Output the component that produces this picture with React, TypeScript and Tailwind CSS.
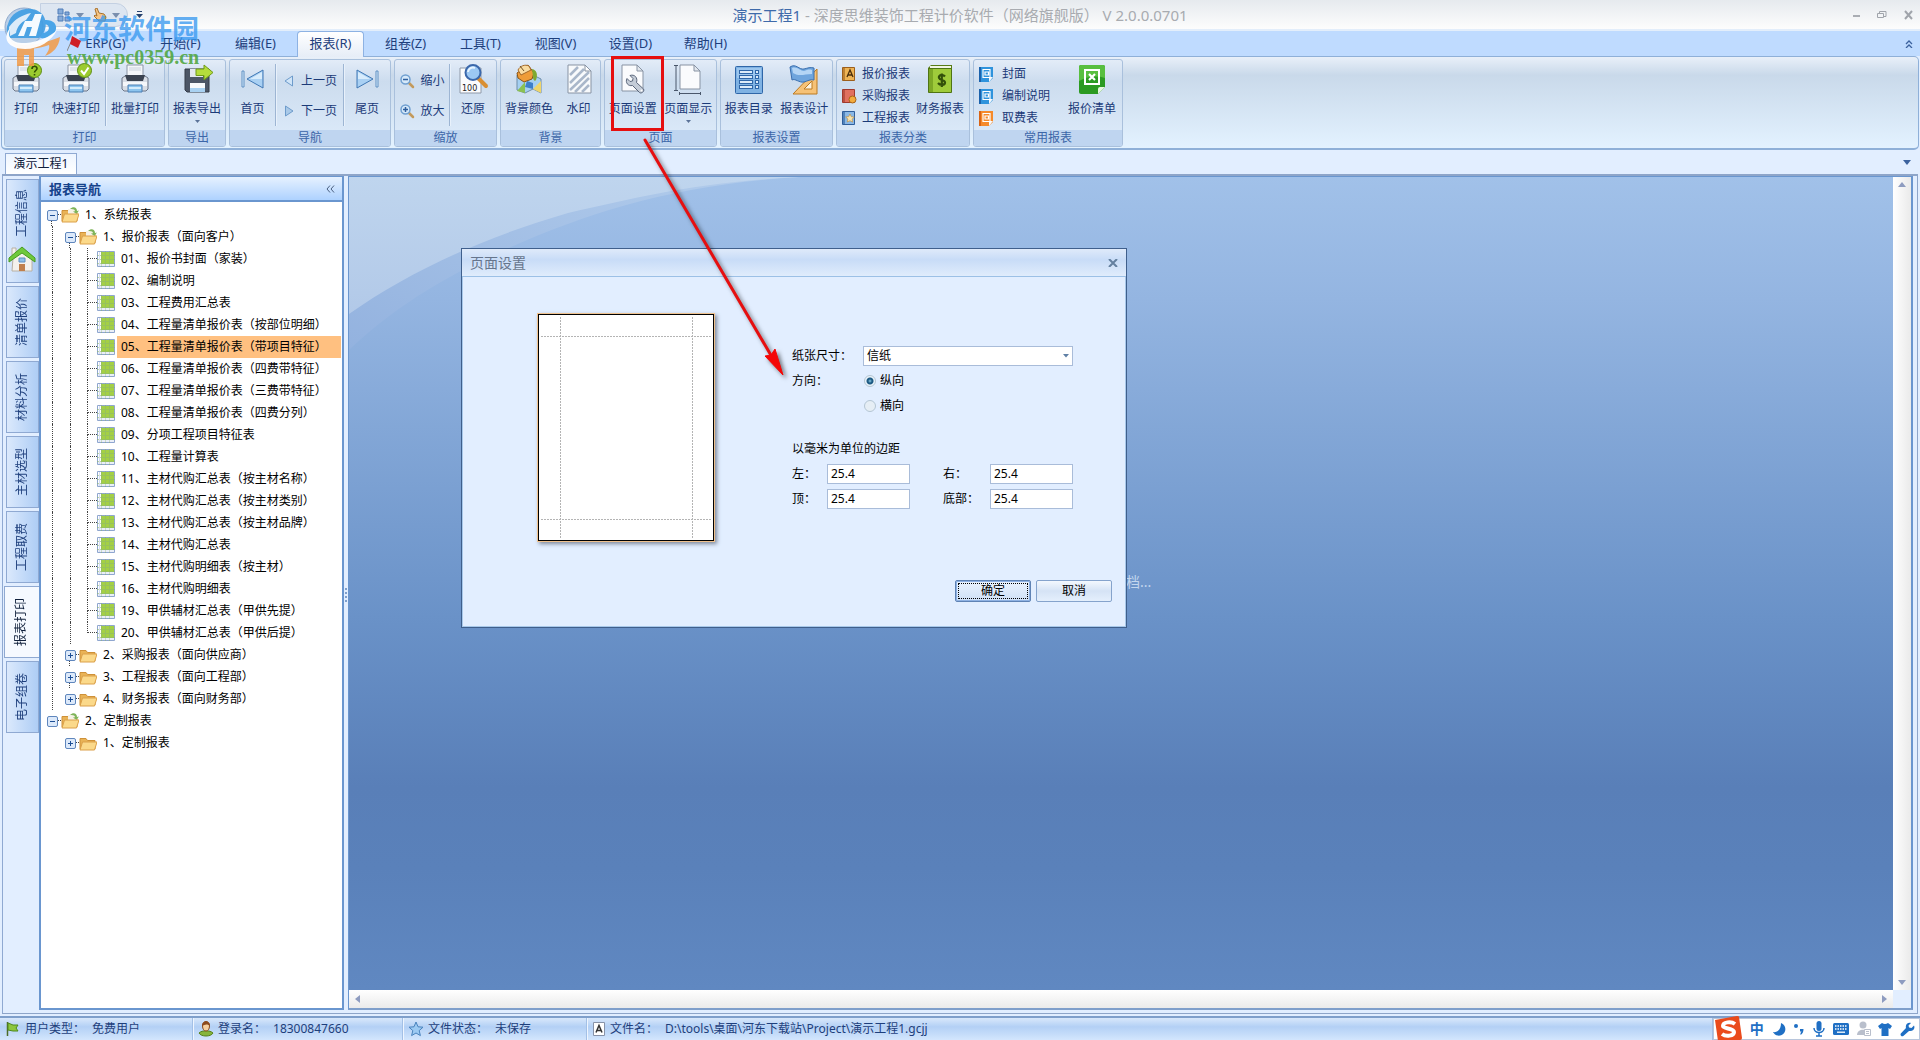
import type { ReactNode } from "react";

const FONT =
  "font-['Noto_Sans','Noto_Sans_CJK_SC',sans-serif] text-[12px] leading-[16px]";

/* ---------- ribbon icons ---------- */

function PrinterIcon({ badge }: { badge?: "question" | "check" }) {
  return (
    <svg width="32" height="32" viewBox="0 0 32 32">
      <path d="M8 2h16v12H8z" fill="#f4f6f9" stroke="#8b95a5" />
      <path d="M10 4h12v4H10z" fill="#dfe4eb" />
      <path d="M3 15l3-2h20l3 2v11l-2 2H5l-2-2z" fill="#d8dde5" stroke="#6c7789" />
      <path d="M6 12h20l-2 6H8z" fill="#3a4250" />
      <path d="M4 19h24v4H4z" fill="#f5f7fa" />
      <path d="M9 22h14v7H9z" fill="#8cc4ee" stroke="#4a7fb4" />
      <path d="M10 25h12" stroke="#d4ebfb" strokeWidth="2" />
      {badge && (
        <circle cx="24.500" cy="7.500" r="7" fill="#9ccb2f" stroke="#5d8d12" />
      )}
      {badge === "question" && (
        <path
          d="M22 6c0-3.500 5-3.500 5-.5 0 2-2.500 2-2.500 4M24.500 11v1.500"
          fill="none"
          stroke="#304d05"
          strokeWidth="1.600"
        />
      )}
      {badge === "check" && (
        <path d="M21 7.500l3 3.500 4.500-6.500" fill="none" stroke="#fff" strokeWidth="2" />
      )}
    </svg>
  );
}

function ExportIcon() {
  return (
    <svg width="32" height="32" viewBox="0 0 32 32">
      <path d="M4 6h24v23H6l-2-2z" fill="#4c5666" stroke="#343c49" />
      <path d="M9 6h13v8H9z" fill="#e3e8ee" />
      <path d="M9 20h15v9H9z" fill="#f7f9fb" />
      <path d="M9 25h15v4H9z" fill="#a9d1f1" />
      <path d="M15 6h8V2l9 7.500-9 7.500v-4.500h-8z" fill="#b5dc3c" stroke="#6f9a18" />
    </svg>
  );
}

function SkipIcon({ last }: { last?: boolean }) {
  return (
    <svg width="32" height="32" viewBox="0 0 32 32" className={last ? "-scale-x-100" : ""}>
      <path d="M5 8v16h2V8z" fill="#d8ecfc" stroke="#5e8fc2" />
      <path d="M26 7v18L10 16z" fill="#a9d0f3" stroke="#3f77b4" />
      <path d="M25 9v7H13z" fill="#d8ecfc" />
    </svg>
  );
}

function StepIcon({ next }: { next?: boolean }) {
  return (
    <svg width="14" height="14" viewBox="0 0 14 14" className={next ? "-scale-x-100" : ""}>
      <path d="M10.500 2v10L3 7z" fill={next ? "#a9c9e8" : "#cfe4f8"} stroke="#6d9bcb" />
    </svg>
  );
}

function ZoomIcon({ plus }: { plus?: boolean }) {
  return (
    <svg width="16" height="16" viewBox="0 0 16 16">
      <path d="M10 10l4 4" stroke="#c39a5c" strokeWidth="2.500" strokeLinecap="round" />
      <circle cx="6.500" cy="6.500" r="4.500" fill="#d6e9fa" stroke="#6f9fd0" strokeWidth="1.500" />
      <path d={plus ? "M4 6.500h5M6.500 4v5" : "M4 6.500h5"} stroke="#2f5f9e" strokeWidth="1.500" />
    </svg>
  );
}

function RestoreIcon() {
  return (
    <svg width="32" height="32" viewBox="0 0 32 32">
      <path d="M3 5h21v25H3z" fill="#fbfcfd" stroke="#8e99a8" />
      <path d="M21 15l8 8" stroke="#d98f33" strokeWidth="4" strokeLinecap="round" />
      <circle cx="16" cy="9.500" r="7.500" fill="#9cc8f3" stroke="#3b68ab" strokeWidth="2" />
      <path d="M11 9a5 5 0 0 1 7-4" fill="none" stroke="#e7f4ff" strokeWidth="2" />
      <text x="5" y="28" fontSize="8" fill="#222" fontFamily="DejaVu Sans">
        100
      </text>
    </svg>
  );
}

function BackColorIcon() {
  return (
    <svg width="32" height="32" viewBox="0 0 32 32">
      <path d="M4 12l8 4 8-4 8 4v14l-8-4-8 4-8-3z" fill="#a5d0f2" stroke="#6f8ca8" />
      <path d="M4 28l8-9v11z" fill="#8cc152" />
      <path d="M12 24l8 2v-6l-6-2z" fill="#3e7fc9" />
      <path d="M20 26l8-8v12z" fill="#efd56a" />
      <path d="M4 10l11-8 6 8-2 6-8 3-6-4z" fill="#ef9c38" stroke="#8a5415" />
      <path d="M5 7c2-4 7-6 11-4l2 4-10 5z" fill="#f9dba0" stroke="#a2682a" />
      <path d="M7 3l4 5" stroke="#6f5124" />
      <path d="M19 6c5 1 6 6 4 11-1 2-3 0-3-3z" fill="#7fa92f" />
    </svg>
  );
}

function WatermarkIcon() {
  return (
    <svg width="32" height="32" viewBox="0 0 32 32">
      <path d="M5 2h17l6 6v22H5z" fill="#f8fafc" stroke="#8893a3" />
      <path
        d="M7 12l8-8M7 20L21 6M7 27L26 9M12 29l14-14M19 29l7-7"
        stroke="#a9b7ca"
        strokeWidth="2.500"
      />
      <path d="M22 2l6 6h-6z" fill="#fff" stroke="#8893a3" />
    </svg>
  );
}

function PageSetupIcon() {
  return (
    <svg width="32" height="32" viewBox="0 0 32 32">
      <path d="M5 2h15l6 6v20H5z" fill="#fafbfd" stroke="#8893a3" />
      <path d="M20 2v6h6z" fill="#e2e7ee" stroke="#8893a3" />
      <path
        d="M13 12.500l3 3-.5 2.500-2.500.5-3-3c-2 4 1 8 5.500 7l7 7c1.500 1.500 5.500-1 4-3.500l-7-6.500c1.500-5-2-8.500-6.500-7z"
        fill="#c4ccd7"
        stroke="#59657a"
      />
      <circle cx="24.500" cy="27.500" r="1" fill="#fff" />
    </svg>
  );
}

function PageViewIcon() {
  return (
    <svg width="32" height="32" viewBox="0 0 32 32">
      <path d="M8 2h14l6 6v18H8z" fill="#fafbfd" stroke="#8893a3" />
      <path d="M22 2v6h6z" fill="#e2e7ee" stroke="#8893a3" />
      <path d="M2 2.500h4M4 2v26M2 27.500h4M7 30.500h21M7.500 29v3M28.500 29v3" stroke="#4a576b" fill="none" />
    </svg>
  );
}

function CatalogIcon() {
  return (
    <svg width="32" height="32" viewBox="0 0 32 32">
      <rect x="2.500" y="3.500" width="27" height="27" rx="1" fill="#7fb2e3" stroke="#2f66a8" />
      <rect x="4" y="5" width="24" height="10" fill="#9cc6ee" />
      {[7, 12, 17, 22].map((y) => (
        <g key={y} fill="#dcebf9" stroke="#2f66a8">
          <rect x="6.500" y={y + 0.5} width="13" height="3" />
          <rect x="22.500" y={y + 0.5} width="3" height="3" />
        </g>
      ))}
    </svg>
  );
}

function DesignIcon() {
  return (
    <svg width="32" height="32" viewBox="0 0 32 32">
      <path d="M29 6v25H5z" fill="#f6c277" stroke="#bb7a22" />
      <path d="M24 18v8h-8z" fill="#fdf3df" stroke="#bb7a22" />
      <path d="M2 4c6-4 9 3 14 2 4-1 6-2 10-1v12c-4-1-6 1-10 2-5 1-9-4-12-2z" fill="#6fa5dd" stroke="#3a6eae" />
      <path d="M4 5c5-2 8 3 12 3 3-1 5-2 8-1v4c-8 0-12 3-19-1z" fill="#b4d5f5" />
    </svg>
  );
}

function LedgerIcon() {
  return (
    <svg width="32" height="32" viewBox="0 0 32 32">
      <path d="M4 5l3-3h21v25l-2 2H4z" fill="#587c16" />
      <path d="M6 3h21v3H6z" fill="#f2f6e2" />
      <path d="M4.500 5.500h23v24h-23z" fill="#9fcb3b" stroke="#4f7413" />
      <path d="M5 6h4v23H5z" fill="#7da826" />
      <path
        d="M21 13.500c-2-2.500-7-1.500-6 1.500s6 1.500 6 4.500-5 3-7 .5M17.800 10.500v13.500"
        fill="none"
        stroke="#33500a"
        strokeWidth="2.200"
      />
    </svg>
  );
}

function ExcelIcon() {
  return (
    <svg width="32" height="32" viewBox="0 0 32 32">
      <path d="M3 4q0-2 2-2h22q2 0 2 2v20l-7 7H5q-2 0-2-2z" fill="#2b9a22" />
      <path d="M3 4q0-2 2-2h22q2 0 2 2v11q-13-4-26 3z" fill="#58bf3f" />
      <path d="M9 7h14v14H9z" fill="none" stroke="#fff" strokeWidth="2" />
      <path d="M13 11l6 6M19 11l-6 6" stroke="#fff" strokeWidth="2.200" />
      <path d="M29 24l-7 7v-5q0-2 2-2z" fill="#e6f6df" />
    </svg>
  );
}

function BookIcon({ fill, edge, kind }: { fill: string; edge: string; kind: "letter" | "coin" | "star" }) {
  return (
    <svg width="16" height="16" viewBox="0 0 16 16">
      <path d="M1.500 1.500h12v13h-12z" fill={fill} stroke={edge} />
      <path d="M2 2h2v12H2z" fill={edge} opacity=".6" />
      {kind === "letter" && <path d="M6 11l3-7 3 7M7 9h4" fill="none" stroke="#4b2f0c" strokeWidth="1.300" />}
      {kind === "coin" && <circle cx="11.500" cy="11.500" r="3.500" fill="#f2ac3e" stroke="#a8641a" />}
      {kind === "star" && (
        <path d="M9 4l1.300 2.700 3 .4-2.200 2 .6 3L9 10.700 6.300 12l.6-3-2.200-2 3-.4z" fill="#f6e3b0" stroke="#c18a33" strokeWidth=".6" />
      )}
    </svg>
  );
}

function SheetIcon({ fill, dark }: { fill: string; dark: string }) {
  return (
    <svg width="16" height="16" viewBox="0 0 16 16">
      <path d="M1 1h14v11l-4 4H1z" fill={fill} />
      <path d="M1 1h2v15H1z" fill={dark} />
      <path d="M15 11l-4 5v-4q0-1 1-1z" fill="#f4f8fc" />
      <path d="M5 3.500h7v8H5zM7 6h3.500v3H7z" fill="none" stroke="#fff" strokeWidth="1.200" />
    </svg>
  );
}

/* ---------- small shared pieces ---------- */

function Triangle({ dir, color = "#5a7298" }: { dir: "up" | "down" | "left" | "right"; color?: string }) {
  const shapes = {
    up: "M0 6h8L4 1z",
    down: "M0 2h8L4 7z",
    left: "M6 0v8L1 4z",
    right: "M2 0v8l5-4z",
  };
  return (
    <svg width="8" height="8" viewBox="0 0 8 8" className="shrink-0">
      <path d={shapes[dir]} fill={color} />
    </svg>
  );
}

function Separator() {
  return <div className="my-1 w-px bg-[#9db5d3] shadow-[1px_0_0_#e8f1fb]" />;
}

function RibbonGroup({ title, width, children }: { title: string; width: string; children: ReactNode }) {
  return (
    <section
      className={`flex flex-col overflow-hidden rounded-[3px] border border-[#a9c0dc] bg-linear-to-b from-[#e3ecf8] via-[#ccdcee] via-25% to-[#deecfb] ${width}`}
    >
      <div className="flex flex-1">{children}</div>
      <h2 className="h-4 bg-[#bfd5f0] text-center leading-[16px] text-[#3c66a8]">{title}</h2>
    </section>
  );
}

function BigButton({ icon, label, width = "flex-1", menu }: { icon: ReactNode; label: string; width?: string; menu?: boolean }) {
  return (
    <button type="button" className={`flex flex-col items-center pt-[3px] whitespace-nowrap ${width}`}>
      {icon}
      <span className="mt-[6px]">{label}</span>
      {menu && (
        <svg width="5" height="3" viewBox="0 0 5 3" className="mt-[3px]">
          <path d="M0 0h5L2.500 3z" fill="#5a7298" />
        </svg>
      )}
    </button>
  );
}

function SmallButton({ icon, label }: { icon: ReactNode; label: string }) {
  return (
    <button type="button" className="flex items-center gap-[5px] whitespace-nowrap">
      {icon}
      {label}
    </button>
  );
}

/* ---------- header ---------- */

const menus = ["ERP(G)", "开始(F)", "编辑(E)", "报表(R)", "组卷(Z)", "工具(T)", "视图(V)", "设置(D)", "帮助(H)"];

function TitleBar() {
  return (
    <header className="relative flex h-[31px] shrink-0 items-center border-b-2 border-[#e3eefb] bg-linear-to-b from-[#e6eaee] to-[#fdfdfd]">
      <div className="ml-10 flex h-6 w-[88px] items-center gap-[5px] rounded-r-full border border-[#c3d0e2] bg-[#dde6f1] pl-4">
        <svg width="14" height="14" viewBox="0 0 14 14">
          <path d="M1 1h5v5H1zM8 4h4v3H8zM1 8h5v5H1zM8 9h5v4H8z" fill="#86abd9" stroke="#4f7cb8" />
        </svg>
        <Triangle dir="down" color="#7a8fae" />
        <svg width="14" height="14" viewBox="0 0 14 14" className="ml-1">
          <path d="M2 1l2-1 2 5 5 1 2 3-1 4H6L1 8l1-1 2 1z" fill="#f6c583" stroke="#a8712c" />
        </svg>
        <Triangle dir="down" color="#7a8fae" />
      </div>
      <svg width="7" height="7" viewBox="0 0 7 7" className="ml-2">
        <path d="M1 0h5v1H1zM0 3h7L3.500 7z" fill="#27436f" />
      </svg>
      <h1 className="flex-1 pr-[75px] text-center text-[15px] whitespace-nowrap text-[#a8abb0]">
        <span className="text-[#3e6aaa]">演示工程1</span> - 深度思维装饰工程计价软件（网络旗舰版） V 2.0.0.0701
      </h1>
      <div className="flex w-[68px] items-center justify-between pr-[7px]">
        <button type="button" aria-label="最小化">
          <svg width="8" height="10" viewBox="0 0 8 10">
            <path d="M1 5h7v2H1z" fill="#a9adb3" />
          </svg>
        </button>
        <button type="button" aria-label="还原窗口">
          <svg width="10" height="10" viewBox="0 0 10 10">
            <path d="M.5 3.500h6v4h-6zM2.500 3V1.500h6.500v5H7" fill="none" stroke="#a0a4ab" />
          </svg>
        </button>
        <button type="button" aria-label="关闭">
          <svg width="9" height="10" viewBox="0 0 9 10">
            <path d="M1 1l7 8M8 1L1 9" stroke="#a0a4ab" strokeWidth="2" />
          </svg>
        </button>
      </div>
    </header>
  );
}

function MenuBar() {
  return (
    <nav className="flex h-[25px] shrink-0 items-stretch bg-[#bfdbff] pl-[68px] text-[13px] text-[#1e3f7c]">
      {menus.map((menu) => (
        <button
          type="button"
          key={menu}
          className={
            menu === "报表(R)"
              ? "z-10 mx-1 -mb-px w-[67px] rounded-t-[4px] border border-b-0 border-[#8db2e3] bg-linear-to-b from-white to-[#e6edf7] pb-[3px]"
              : "w-[75px] pb-[2px]"
          }
        >
          {menu}
        </button>
      ))}
      <button type="button" aria-label="收起功能区" className="mr-[7px] ml-auto">
        <svg width="8" height="8" viewBox="0 0 8 8">
          <path d="M1 4l3-3 3 3M1 8l3-3 3 3" fill="none" stroke="#3c629e" strokeWidth="1.300" />
        </svg>
      </button>
    </nav>
  );
}

function Ribbon() {
  return (
    <div className="mx-px flex h-[94px] shrink-0 gap-[3px] rounded-[5px] border border-b-2 border-[#8fb0d8] bg-linear-to-b from-[#e9f0f9] via-[#c9d9ea] via-20% to-[#e3f2ff] pt-[2px] pr-1 pb-px pl-[2px] text-[#1b3a78]">
      <RibbonGroup title="打印" width="w-[161px]">
        <BigButton icon={<PrinterIcon badge="question" />} label="打印" width="w-[42px]" />
        <BigButton icon={<PrinterIcon badge="check" />} label="快速打印" width="w-[58px]" />
        <Separator />
        <BigButton icon={<PrinterIcon />} label="批量打印" />
      </RibbonGroup>
      <RibbonGroup title="导出" width="w-[58px]">
        <BigButton icon={<ExportIcon />} label="报表导出" menu />
      </RibbonGroup>
      <RibbonGroup title="导航" width="w-[162px]">
        <BigButton icon={<SkipIcon />} label="首页" width="w-[45px]" />
        <Separator />
        <div className="flex w-[67px] flex-col items-center justify-center gap-[14px] pt-[2px]">
          <SmallButton icon={<StepIcon />} label="上一页" />
          <SmallButton icon={<StepIcon next />} label="下一页" />
        </div>
        <Separator />
        <BigButton icon={<SkipIcon last />} label="尾页" />
      </RibbonGroup>
      <RibbonGroup title="缩放" width="w-[103px]">
        <div className="flex w-[54px] flex-col items-center justify-center gap-[14px] pt-[2px]">
          <SmallButton icon={<ZoomIcon />} label="缩小" />
          <SmallButton icon={<ZoomIcon plus />} label="放大" />
        </div>
        <Separator />
        <BigButton icon={<RestoreIcon />} label="还原" />
      </RibbonGroup>
      <RibbonGroup title="背景" width="w-[101px]">
        <BigButton icon={<BackColorIcon />} label="背景颜色" width="w-[56px]" />
        <BigButton icon={<WatermarkIcon />} label="水印" />
      </RibbonGroup>
      <RibbonGroup title="页面" width="w-[113px]">
        <BigButton icon={<PageSetupIcon />} label="页面设置" />
        <BigButton icon={<PageViewIcon />} label="页面显示" menu />
      </RibbonGroup>
      <RibbonGroup title="报表设置" width="w-[113px]">
        <BigButton icon={<CatalogIcon />} label="报表目录" />
        <BigButton icon={<DesignIcon />} label="报表设计" />
      </RibbonGroup>
      <RibbonGroup title="报表分类" width="w-[134px]">
        <div className="flex w-[74px] flex-col justify-center gap-[6px] pt-[2px] pl-[4px]">
          <SmallButton icon={<BookIcon fill="#eeb455" edge="#9c5f1c" kind="letter" />} label="报价报表" />
          <SmallButton icon={<BookIcon fill="#e0705f" edge="#a03a2e" kind="coin" />} label="采购报表" />
          <SmallButton icon={<BookIcon fill="#8ab8e6" edge="#2f5f9c" kind="star" />} label="工程报表" />
        </div>
        <BigButton icon={<LedgerIcon />} label="财务报表" />
      </RibbonGroup>
      <RibbonGroup title="常用报表" width="w-[150px]">
        <div className="flex w-[88px] flex-col justify-center gap-[6px] pt-[2px] pl-[4px] [&>button]:gap-2">
          <SmallButton icon={<SheetIcon fill="#2f93dc" dark="#1b62ac" />} label="封面" />
          <SmallButton icon={<SheetIcon fill="#2f93dc" dark="#1b62ac" />} label="编制说明" />
          <SmallButton icon={<SheetIcon fill="#f58a2b" dark="#d96414" />} label="取费表" />
        </div>
        <BigButton icon={<ExcelIcon />} label="报价清单" />
      </RibbonGroup>
    </div>
  );
}

/* ---------- left side ---------- */

const sideTabs = ["工程信息", "清单报价", "材料分析", "主材选型", "工程取费", "报表打印", "电子组卷"];

function HouseIcon() {
  return (
    <svg width="28" height="28" viewBox="0 0 28 28">
      <path d="M5 13L14 6l10 7v13H4z" fill="#f4f1ec" stroke="#b8b0a4" />
      <path d="M4 3h4v7H4z" fill="#f4f1ec" stroke="#b8b0a4" />
      <path d="M1 13L14 2l13 11v4L14 8 1 17z" fill="#6fc93c" stroke="#479a20" />
      <path d="M11 19h6v7h-6z" fill="#c07f4c" />
      <path d="M11 13h6v4h-6z" fill="#8fc0ea" stroke="#5f8fc0" />
    </svg>
  );
}

function SideTabs() {
  return (
    <nav className="flex w-[37px] shrink-0 flex-col gap-[3px] border-l border-[#8fa9d2] pt-[3px] pl-[3px]">
      {sideTabs.map((tab, i) => {
        const active = tab === "报表打印";
        return (
          <button
            type="button"
            key={tab}
            className={`flex flex-col items-center justify-center border pr-[2px] ${i === 0 ? "h-[104px]" : "h-[72px]"} ${
              active
                ? "-ml-[2px] border-r-0 border-[#8fa9d2] bg-[#f5f9ff] text-[#10203c]"
                : "border-[#8fa9d2] bg-linear-to-r from-[#dbe9fc] to-[#aecdf5] text-[#1e3f7c]"
            }`}
          >
            <span className="rotate-180 whitespace-nowrap [text-orientation:sideways] [writing-mode:vertical-rl]">
              {tab}
            </span>
            {i === 0 && (
              <span className="mt-[7px]">
                <HouseIcon />
              </span>
            )}
          </button>
        );
      })}
    </nav>
  );
}

type Node = {
  label: string;
  // vertical guide of each ancestor column, true when it runs on below
  guides: boolean[];
  kind: "open" | "closed" | "leaf";
  last?: boolean;
  first?: boolean;
  selected?: boolean;
};

const leaves = [
  "01、报价书封面（家装）",
  "02、编制说明",
  "03、工程费用汇总表",
  "04、工程量清单报价表（按部位明细）",
  "05、工程量清单报价表（带项目特征）",
  "06、工程量清单报价表（四费带特征）",
  "07、工程量清单报价表（三费带特征）",
  "08、工程量清单报价表（四费分列）",
  "09、分项工程项目特征表",
  "10、工程量计算表",
  "11、主材代购汇总表（按主材名称）",
  "12、主材代购汇总表（按主材类别）",
  "13、主材代购汇总表（按主材品牌）",
  "14、主材代购汇总表",
  "15、主材代购明细表（按主材）",
  "16、主材代购明细表",
  "19、甲供辅材汇总表（甲供先提）",
  "20、甲供辅材汇总表（甲供后提）",
];

const nodes: Node[] = [
  { label: "1、系统报表", guides: [], kind: "open", first: true },
  { label: "1、报价报表（面向客户）", guides: [true], kind: "open" },
  ...leaves.map((label, i): Node => ({
    label,
    guides: [true, true],
    kind: "leaf",
    last: i === leaves.length - 1,
    selected: label.startsWith("05"),
  })),
  { label: "2、采购报表（面向供应商）", guides: [true], kind: "closed" },
  { label: "3、工程报表（面向工程部）", guides: [true], kind: "closed" },
  { label: "4、财务报表（面向财务部）", guides: [true], kind: "closed", last: true },
  { label: "2、定制报表", guides: [], kind: "open", last: true },
  { label: "1、定制报表", guides: [false], kind: "closed", last: true },
];

function FolderIcon({ open }: { open: boolean }) {
  return (
    <svg width="18" height="18" viewBox="0 0 18 18">
      <path d="M1 4.500h6l1.500 2H16V15H1z" fill="#e9b356" stroke="#cf9138" />
      {open && (
        <>
          <path d="M7 3h9v6H7z" fill="#f6f2e6" />
          <path d="M9 3c3-3 7-2 7 2l2-.5L15.500 8 12 5.500l2-.2c0-2-2-2.600-5-2.300z" fill="#7fb45a" />
        </>
      )}
      <path d="M3.500 8H18l-2.500 8H1z" fill="#fbd98a" stroke="#dba04a" />
    </svg>
  );
}

function GridIcon() {
  return (
    <svg width="18" height="18" viewBox="0 0 18 18">
      <path d="M.5 1.500h17v15H.5z" fill="#fff" stroke="#8fa6cf" />
      <path d="M4 2h13v12H4z" fill="#a4d044" />
      <path d="M4.500 1v16M8.500 1v16M12.500 1v16M0 5.500h18M0 9.500h18M0 13.500h18" stroke="#8fb870" strokeWidth="1" opacity=".6" />
      <path d="M2.500 2v14M1 15h16" stroke="#d5def0" />
    </svg>
  );
}

function TreeRow({ node }: { node: Node }) {
  const dots = "border-dotted border-[#444]";
  return (
    <li className="flex h-[22px] items-stretch" aria-selected={node.selected} role="treeitem">
      {node.guides.map((on, i) => (
        <span key={i} className="flex w-[18px] justify-center">
          {on && <span className={`border-l ${dots}`} />}
        </span>
      ))}
      <span className="grid w-[18px] grid-cols-2 grid-rows-2 [&>*]:col-start-1">
        <span className={node.first ? "" : `border-r ${dots}`} />
        <span className={`row-start-2 ${node.last ? "" : `border-r ${dots}`}`} />
        <span className={`col-start-2! row-start-1 border-b ${dots}`} />
        {node.kind !== "leaf" && (
          <button
            type="button"
            aria-label={node.kind === "open" ? "收起" : "展开"}
            className="z-10 col-span-2 row-span-2 row-start-1 place-self-center"
          >
            <svg width="11" height="11" viewBox="0 0 11 11">
              <rect x=".5" y=".5" width="10" height="10" rx="1.500" fill="#dce9fa" stroke="#5f86bd" />
              <path d={node.kind === "open" ? "M3 5.500h5" : "M3 5.500h5M5.500 3v5"} stroke="#1d4f96" />
            </svg>
          </button>
        )}
      </span>
      <span className="flex items-center">
        {node.kind === "leaf" ? <GridIcon /> : <FolderIcon open={node.kind === "open"} />}
      </span>
      <span className={`ml-[2px] flex flex-1 items-center pl-1 whitespace-nowrap ${node.selected ? "bg-[#ffc080]" : ""}`}>
        {node.label}
      </span>
    </li>
  );
}

function NavPanel() {
  return (
    <aside className="mb-[3px] flex w-[305px] shrink-0 flex-col border-2 border-t border-[#6a96cf] bg-white">
      <div className="flex h-[25px] shrink-0 items-center justify-between border-b-2 border-[#6a96cf] bg-linear-to-b from-[#e6f1ff] to-[#aed2ff] pr-[7px] pl-2">
        <h2 className="text-[13px] font-bold text-[#15428b]">报表导航</h2>
        <button type="button" aria-label="折叠">
          <svg width="9" height="8" viewBox="0 0 9 8">
            <path d="M4 .5L1 4l3 3.500M8 .5L5 4l3 3.500" fill="none" stroke="#4a5f80" />
          </svg>
        </button>
      </div>
      <ul className="pt-[2px] pr-px pl-[2px]" role="tree">
        {nodes.map((node, i) => (
          <TreeRow key={i} node={node} />
        ))}
      </ul>
    </aside>
  );
}

/* ---------- dialog ---------- */

function PagePreview() {
  return (
    <svg width="178" height="229" viewBox="0 0 178 229" className="mt-[36px] shadow-[2px_2px_4px_#7f8a9c]">
      <rect x=".5" y=".5" width="177" height="228" fill="#fff" stroke="#f0c28e" />
      <rect x="1.500" y="1.500" width="175" height="226" fill="#fff" stroke="#000" />
      <path
        d="M23.500 4v222M155.500 4v222M4 23.500h170M4 206.500h170"
        stroke="#b4b4b4"
        strokeDasharray="2 1"
      />
    </svg>
  );
}

const boxStyle = "h-5 border border-[#a9bcd9] bg-white px-[3px] text-[12px] text-black outline-none";
const radioStyle =
  "size-3 appearance-none rounded-full border border-[#b4c6d4] bg-[#e6eef5] checked:bg-[radial-gradient(circle,#8fd0ea_0,#1f5b84_2px,#1f5b84_3px,#eaf3fa_4px)]";

function MarginField({ id, label, labelWidth }: { id: string; label: string; labelWidth: string }) {
  return (
    <div className="flex items-center">
      <label htmlFor={id} className={labelWidth}>
        {label}
      </label>
      <input id={id} type="text" defaultValue="25.4" className={`w-[83px] ${boxStyle}`} />
    </div>
  );
}

function PageSetupDialog() {
  return (
    <div
      role="dialog"
      aria-labelledby="dialog-title"
      className="absolute top-[71px] left-[112px] flex w-[666px] flex-col border border-[#3f5f8c] bg-[#e2eeff] text-black"
    >
      <div className="flex h-7 items-center justify-between border-b border-[#9cc0e6] bg-linear-to-b from-[#dfeafa] via-[#c8dcf7] via-40% to-[#e0ecfc] pr-2 pl-2">
        <h2 id="dialog-title" className="text-[14px] text-[#66758c]">
          页面设置
        </h2>
        <button type="button" aria-label="关闭">
          <svg width="10" height="8" viewBox="0 0 10 8">
            <path d="M1 0l8 8M9 0L1 8" stroke="#64809f" strokeWidth="2" />
          </svg>
        </button>
      </div>
      <div className="flex flex-col border border-t-0 border-[#a8c8ea] pr-[13px] pb-6 pl-[74px]">
        <div className="flex gap-[77px]">
          <PagePreview />
          <form className="mt-[66px] flex w-[281px] flex-col [&>*]:min-h-[25px]">
            <div className="flex items-center">
              <label htmlFor="paper" className="w-[71px]">
                纸张尺寸：
              </label>
              <div className="grid flex-1 items-center">
                <select id="paper" className={`col-start-1 row-start-1 appearance-none ${boxStyle}`}>
                  <option>信纸</option>
                </select>
                <svg width="6" height="4" viewBox="0 0 6 4" className="pointer-events-none col-start-1 row-start-1 mr-1 justify-self-end">
                  <path d="M0 0h6L3 3.500z" fill="#5f7fa5" />
                </svg>
              </div>
            </div>
            <div className="flex items-start">
              <span className="w-[72px] leading-[25px]">方向：</span>
              <div className="flex flex-col">
                <label className="flex h-[25px] items-center gap-1">
                  <input type="radio" name="direction" defaultChecked className={radioStyle} />
                  纵向
                </label>
                <label className="flex h-[25px] items-center gap-1">
                  <input type="radio" name="direction" className={radioStyle} />
                  横向
                </label>
              </div>
            </div>
            <div className="mt-[18px] flex items-center">以毫米为单位的边距</div>
            <div className="flex justify-between">
              <MarginField id="left" label="左：" labelWidth="w-[35px]" />
              <MarginField id="right" label="右：" labelWidth="w-[47px]" />
            </div>
            <div className="flex justify-between">
              <MarginField id="top" label="顶：" labelWidth="w-[35px]" />
              <MarginField id="bottom" label="底部：" labelWidth="w-[47px]" />
            </div>
          </form>
        </div>
        <div className="mt-[38px] flex justify-end gap-[5px]">
          <button
            type="button"
            className="h-[22px] w-[76px] rounded-[2px] border border-[#5f83b5] bg-linear-to-b from-[#eaf3fe] to-[#cfe0f6] p-[2px] shadow-[inset_0_0_0_1px_#8fb2e3]"
          >
            <span className="flex h-full items-center justify-center border border-dotted border-black">确定</span>
          </button>
          <button
            type="button"
            className="h-[22px] w-[76px] rounded-[2px] border border-[#85a3cc] bg-linear-to-b from-[#f3f8fe] via-[#d5e3f5] to-[#e4effc]"
          >
            取消
          </button>
        </div>
      </div>
    </div>
  );
}

/* ---------- workspace ---------- */

function Workspace() {
  return (
    <main className="mb-[3px] flex min-w-0 flex-1 flex-col border-2 border-t border-l border-[#6a96cf] border-b-[#7f9fcb]">
      <div className="flex min-h-0 flex-1">
        <div className="relative min-w-0 flex-1 bg-[linear-gradient(#a1c1e9_0%,#94b5e1_15%,#6a92c8_54%,#597fb8_75%,#5a81ba_85%,#6088c1_100%)]">
          <svg width="470" height="175" viewBox="0 0 470 175" className="absolute top-0 left-0">
            <defs>
              <linearGradient id="band" x1="1" y1="0" x2="0" y2="1">
                <stop offset="0" stopColor="#b3cdec" />
                <stop offset="1" stopColor="#93b2df" />
              </linearGradient>
              <linearGradient id="glow" x1="0" y1="0" x2="0" y2="1">
                <stop offset="0" stopColor="#bfd5ee" />
                <stop offset="1" stopColor="#b2c9e8" />
              </linearGradient>
            </defs>
            <path d="M0 0h450C330 7 240 35 162 70 100 97 45 130 0 173z" fill="url(#band)" />
            <path d="M0 0h450C350 5 290 20 219 36 130 62 60 95 0 137z" fill="url(#glow)" />
          </svg>
          <p className="absolute top-[397px] left-[777px] text-[14px] text-[#c3d6ee]">档...</p>
          <PageSetupDialog />
        </div>
        <div className="flex w-[18px] shrink-0 flex-col items-center justify-between bg-linear-to-r from-white to-[#eaeaea] py-1">
          <Triangle dir="up" color="#8e9cc0" />
          <Triangle dir="down" color="#8e9cc0" />
        </div>
      </div>
      <div className="flex h-[18px] shrink-0 bg-[#e2eeff]">
        <div className="flex flex-1 items-center justify-between bg-linear-to-b from-white to-[#ebebeb] px-[5px]">
          <Triangle dir="left" color="#8e9cc0" />
          <Triangle dir="right" color="#8e9cc0" />
        </div>
        <div className="w-[18px]" />
      </div>
    </main>
  );
}

/* ---------- status bar ---------- */

function StatusItem({ icon, label, value, width }: { icon: ReactNode; label: string; value: string; width: string }) {
  return (
    <div className={`flex items-center border-r border-[#a3c0e6] pl-[5px] shadow-[1px_0_0_#eef5ff] ${width}`}>
      {icon}
      <span className="ml-1">{label}</span>
      <span className="ml-[7px]">{value}</span>
    </div>
  );
}

function InputTray() {
  return (
    <div className="flex w-[207px] items-center justify-between border border-[#b8c6dc] bg-white pr-1 text-[#1f6fc4]">
      <svg width="28" height="28" viewBox="0 0 28 28" className="-my-1">
        <path d="M1 5L23 1q2 0 2 1l3 21q0 2-2 2L6 28q-2 0-2-2z" fill="#ea4b1c" />
        <path d="M21 9c-4-3-12-2-12 2 0 3 11 2 11 6 0 4-8 5-12 2" fill="none" stroke="#fff" strokeWidth="4" />
      </svg>
      <span className="text-[14px] font-bold">中</span>
      <svg width="14" height="14" viewBox="0 0 14 14">
        <path d="M9 1a6.500 6.500 0 1 1-8 9c5 1 8-3 8-9z" fill="currentColor" />
      </svg>
      <svg width="12" height="12" viewBox="0 0 12 12">
        <circle cx="3" cy="3" r="2" fill="currentColor" />
        <path d="M7 6h3.500c0 3-1 5-3 6v-2l1-1.500H7z" fill="currentColor" />
      </svg>
      <svg width="12" height="16" viewBox="0 0 12 16">
        <rect x="3.500" y="0" width="5" height="10" rx="2.500" fill="currentColor" />
        <path d="M1 7c0 6 10 6 10 0M6 11v4M3 15h6" fill="none" stroke="currentColor" strokeWidth="1.500" />
      </svg>
      <svg width="16" height="12" viewBox="0 0 16 12">
        <rect width="16" height="12" rx="1.500" fill="currentColor" />
        <path d="M2 3h12M2 6h12" stroke="#fff" strokeWidth="1.500" strokeDasharray="1.500 1" />
        <path d="M4 9.200h8" stroke="#fff" strokeWidth="1.300" />
      </svg>
      <svg width="14" height="16" viewBox="0 0 14 16">
        <circle cx="6" cy="4" r="3.500" fill="#b9bfcc" />
        <path d="M0 14c0-7 12-7 12 0z" fill="#b9bfcc" />
        <path d="M7.500 8.500h6v6h-6zM9 10.500h3M9 12.500h3" fill="#fff" stroke="#b9bfcc" />
      </svg>
      <svg width="14" height="13" viewBox="0 0 14 13">
        <path d="M4 0q3 2 6 0l4 3-2 3-1.500-1v8h-7V5L2 6 0 3z" fill="currentColor" />
      </svg>
      <svg width="15" height="15" viewBox="0 0 15 15">
        <path d="M14 3.500L11.500 6 9 5.500 8.500 3.500 11 1C8 0 5 2.500 6 6L.8 11.500c-1 2 1 3.500 2.500 2.500L9 9c4 .8 6.500-2.500 5-5.500z" fill="currentColor" />
      </svg>
    </div>
  );
}

function StatusBar() {
  return (
    <footer className="flex h-6 shrink-0 border-t-2 border-[#7f9fcb] bg-linear-to-b from-[#d9e8fb] via-[#b3d0f5] via-40% to-[#d3e6fd] text-[#1e3f7c]">
      <StatusItem
        width="w-[193px]"
        label="用户类型："
        value="免费用户"
        icon={
          <svg width="16" height="16" viewBox="0 0 16 16">
            <path d="M2.500 1v14" stroke="#4c6b2a" strokeWidth="1.500" />
            <path d="M3 2l5 2h5l-2 3 2 3H8L3 9z" fill="#8dc63f" stroke="#4f8a1c" />
          </svg>
        }
      />
      <StatusItem
        width="w-[210px]"
        label="登录名："
        value="18300847660"
        icon={
          <svg width="16" height="16" viewBox="0 0 16 16">
            <path d="M1 12c3-3 11-3 14 0-2 4-12 4-14 0z" fill="#86b53c" stroke="#55801c" />
            <path d="M4.500 5a3.500 4.500 0 0 1 7 0c0 3-1.500 5-3.500 5S4.500 8 4.500 5z" fill="#f5cf9f" stroke="#8b4a1e" />
            <path d="M4 5c0-6 8-6 8 0-2-2-5-2-8 0z" fill="#8b4a1e" />
          </svg>
        }
      />
      <StatusItem
        width="w-[184px]"
        label="文件状态："
        value="未保存"
        icon={
          <svg width="16" height="16" viewBox="0 0 16 16">
            <path d="M8 1l2 4.800 5 .4-3.800 3.400 1.200 5L8 12l-4.400 2.600 1.200-5L1 6.200l5-.4z" fill="#9ccaf3" stroke="#4a83bd" />
          </svg>
        }
      />
      <StatusItem
        width="flex-1"
        label="文件名："
        value="D:\tools\桌面\河东下载站\Project\演示工程1.gcjj"
        icon={
          <svg width="14" height="16" viewBox="0 0 14 16">
            <path d="M1.500 1.500h11v13h-11z" fill="#fff" stroke="#8792a8" />
            <path d="M4 11.500l3-7 3 7M5 9.500h4" fill="none" stroke="#333" strokeWidth="1.500" />
          </svg>
        }
      />
      <InputTray />
    </footer>
  );
}

/* ---------- overlays ---------- */

function SiteLogo() {
  return (
    <div className="pointer-events-none absolute top-0 left-0 z-20 flex">
      <svg width="64" height="66" viewBox="0 0 64 66">
        <circle cx="24" cy="27" r="19" fill="#b9cfe8" stroke="#8fa9cc" />
        <path d="M8 24C12 8 34 4 43 15c5 8 3 18-4 23H10C6 34 6 28 8 24z" fill="#3f9ce2" opacity=".9" />
        <path d="M45 20c17-1 14 20-5 18l2-5c8 0 9-8 3-9z" fill="#4aa5e8" />
        <path d="M9 27c6-8 13-12 22-14l-5 7c-5 2-9 7-10 13l-6 3z" fill="#dcebf9" />
        <path d="M35 14h7l-6 22h-7l3-9h-5l-3 9h-6l7-15h7z" fill="#f5faff" />
        <path d="M10 42c14 6 32 2 50-5-1 10-7 16-15 19 3-4 5-8 4-11-5 2-10 3-15 3.500V66h-5V55h-5v11h-7V48z" fill="#f29a45" opacity=".85" />
        <path d="M11 27c-6 10 2 17 15 16 12-1 24-6 31-13-5 11-18 19-32 19C8 49 1 38 11 27z" fill="#fff" opacity=".95" />
      </svg>
      <div className="pt-[14px] whitespace-nowrap">
        <p className="text-[27px] leading-[30px] font-bold text-[#3b9af0]/80">河东软件园</p>
        <p className="ml-[3px] font-['Liberation_Serif',serif] text-[20px] leading-[26px] font-bold text-[#4fa63f]/90">
          www.pc0359.cn
        </p>
      </div>
      <svg width="14" height="16" viewBox="0 0 14 16" className="absolute top-[36px] left-[67px]">
        <path d="M4 6L0 15" stroke="#888" />
        <path d="M5 0l9 5-3 7-8-4z" fill="#cf1f26" />
      </svg>
    </div>
  );
}

function Callout() {
  return (
    <svg width="200" height="330" viewBox="0 0 200 330" className="pointer-events-none absolute top-[54px] left-[608px] z-30">
      <rect x="4.500" y="3.500" width="50" height="72" fill="none" stroke="#e60f10" strokeWidth="3" />
      <g className="drop-shadow-[3px_3px_2px_#00000080]">
        <path d="M37 86L164 303" stroke="#e60f10" strokeWidth="3" strokeLinecap="round" />
        <path d="M175 321L157 302l6-1 4-6z" fill="#f40606" stroke="#f40606" />
      </g>
    </svg>
  );
}

export default function App() {
  return (
    <div className={`relative flex h-screen min-h-[800px] flex-col overflow-hidden bg-[#e2eeff] ${FONT}`}>
      <TitleBar />
      <MenuBar />
      <Ribbon />
      <div className="flex h-6 shrink-0 items-end justify-between pr-[9px] pl-[5px]">
        <button
          type="button"
          className="h-[21px] w-[72px] border border-b-0 border-[#8fa9d2] bg-linear-to-b from-[#eef5ff] to-white text-[#10203c]"
        >
          演示工程1
        </button>
        <button type="button" aria-label="文档列表" className="mb-2">
          <Triangle dir="down" color="#3c629e" />
        </button>
      </div>
      <div className="mr-[2px] ml-[2px] flex min-h-0 flex-1 border-t-2 border-r border-b border-[#8ea5c9] pr-1">
        <SideTabs />
        <NavPanel />
        <div className="flex w-1 shrink-0 flex-col items-center justify-center gap-[2px]">
          {[0, 1, 2, 3].map((n) => (
            <span key={n} className="size-[2px] bg-[#7f9fcb]" />
          ))}
        </div>
        <Workspace />
      </div>
      <div className="h-[2px] shrink-0" />
      <StatusBar />
      <SiteLogo />
      <Callout />
    </div>
  );
}
